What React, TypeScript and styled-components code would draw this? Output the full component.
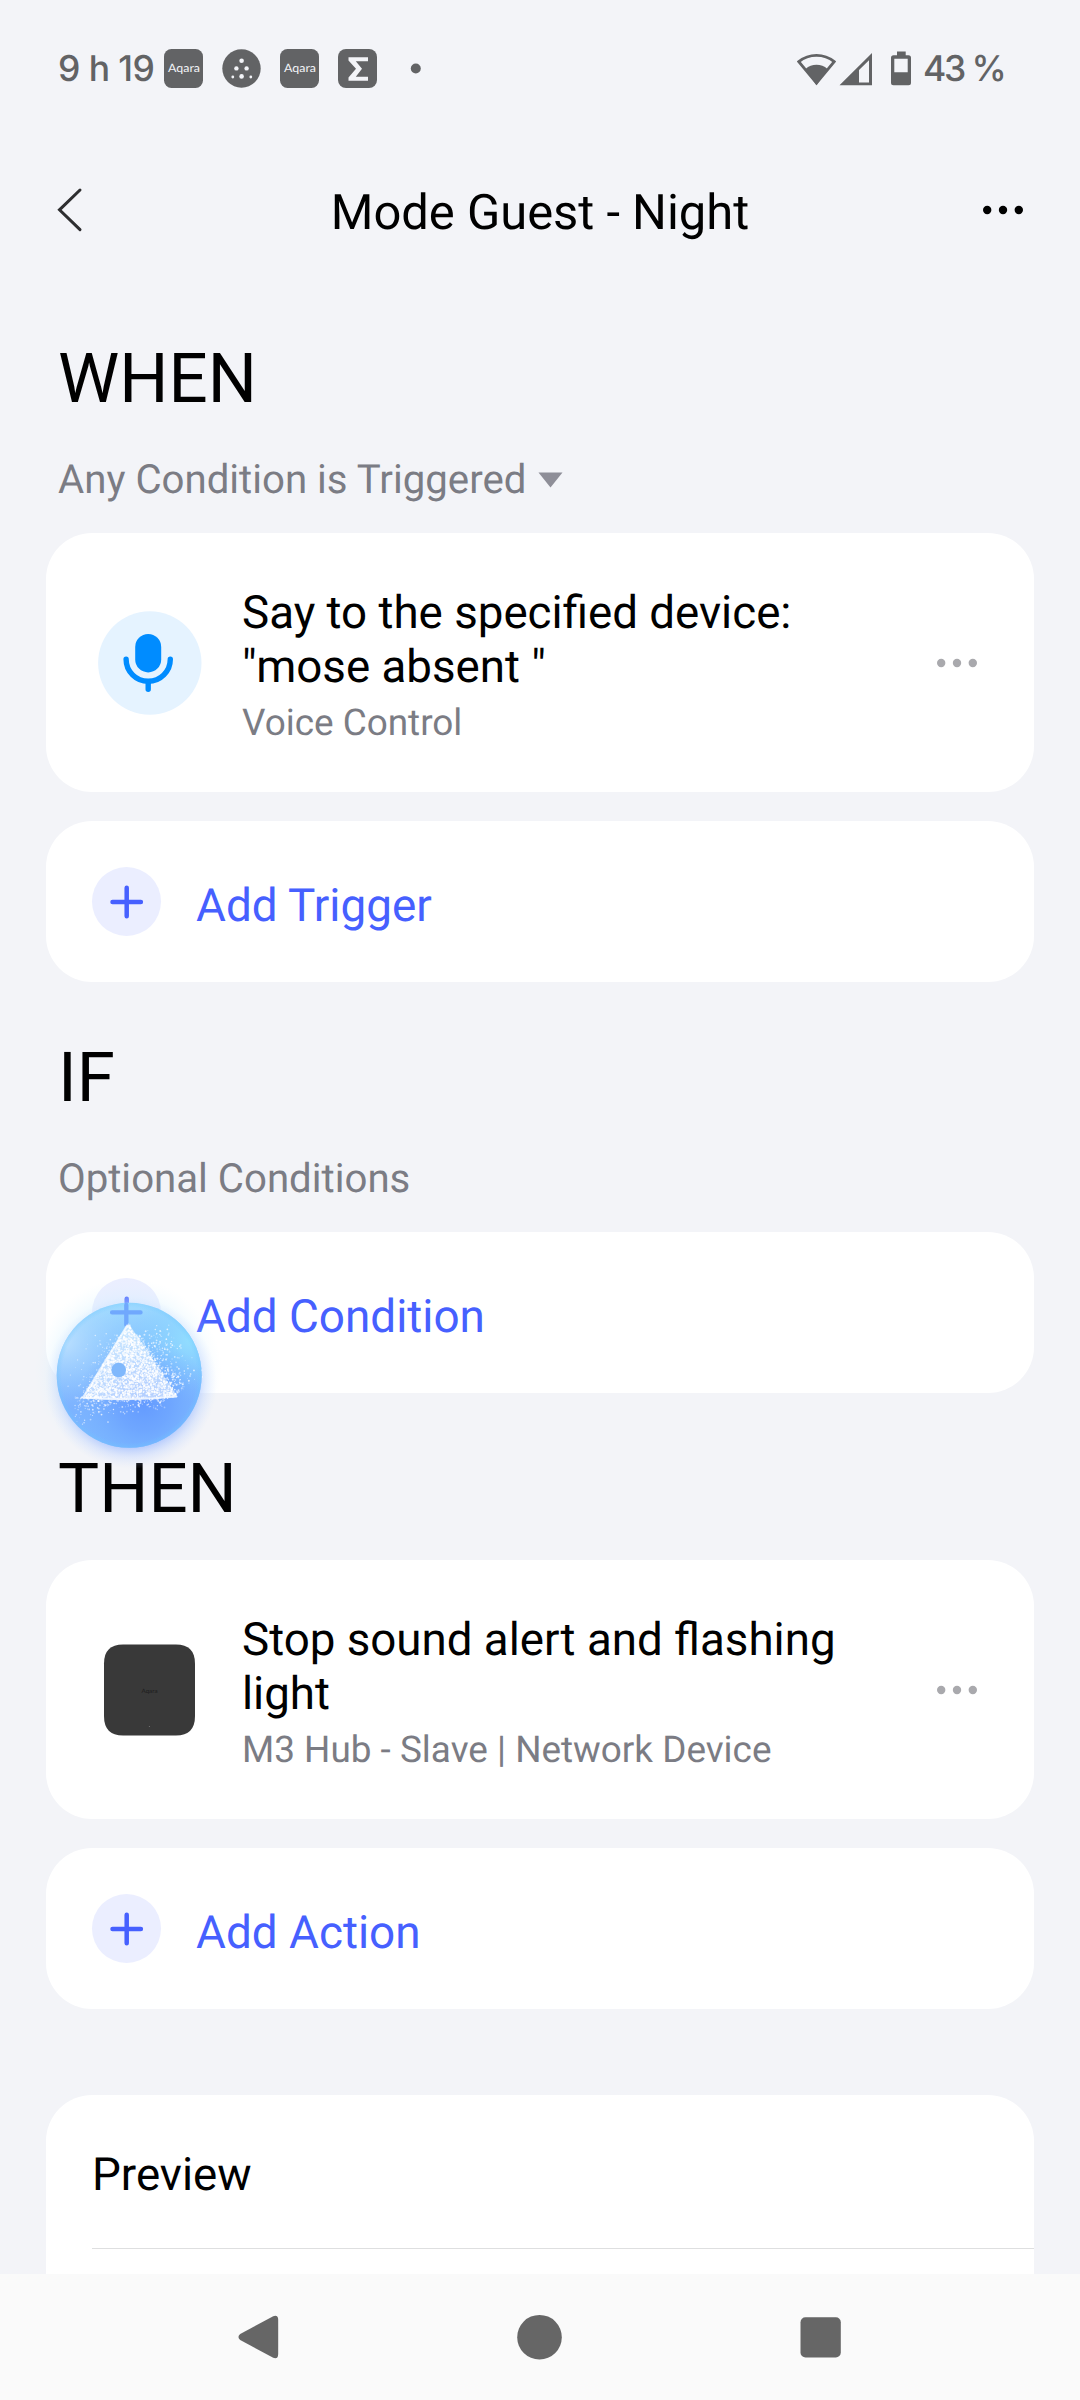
import React from "react";
import styled, { createGlobalStyle } from "styled-components";

const GlobalStyle = createGlobalStyle`
  * { box-sizing: border-box; }
  body { margin: 0; background: #f3f4f8; }
  svg { display: block; flex: none; }
`;

const Screen = styled.div`
  position: relative;
  width: 1080px;
  height: 2400px;
  display: flex;
  flex-direction: column;
  overflow: hidden;
  background: #f3f4f8;
  color: #000;
  font-family: Roboto, "Liberation Sans", sans-serif;
  text-rendering: geometricPrecision;
`;

const StatusBar = styled.div`
  flex: none;
  height: 137px;
  padding: 0 76px 0 58px;
  display: flex;
  justify-content: space-between;
`;

const StatusGroup = styled.div`
  height: 137px;
  display: flex;
  align-items: center;
`;

const StatusText = styled.span<{ $width: number; $spacing: number }>`
  width: ${(p) => p.$width}px;
  letter-spacing: ${(p) => p.$spacing}px;
  color: #626365;
  font-family: Inter, sans-serif;
  font-weight: 500;
  font-size: 35.5px;
  line-height: 137px;
  white-space: nowrap;
`;

const StatusIcons = styled.div`
  display: flex;
  align-items: center;
  gap: 19px;
  margin-left: 8px;
`;

const Header = styled.header`
  flex: none;
  height: 146px;
  padding: 0 56px 1px;
  display: flex;
  align-items: center;
  justify-content: space-between;
`;

const Title = styled.h1`
  margin: 0;
  padding: 7px 0 0 14px;
  font-weight: 400;
  font-size: 48.9px;
  line-height: 60px;
`;

const Scroll = styled.main`
  flex: 1;
  min-height: 0;
  overflow: hidden;
  padding: 0 46px;
`;

const Section = styled.section`
  padding-top: 56px;
`;

const Heading = styled.h2`
  margin: 0;
  padding-left: 12px;
  font-weight: 400;
  font-size: 69px;
  line-height: 80px;
`;

const Caption = styled.div`
  height: 48px;
  margin-top: 37px;
  padding-left: 12px;
  display: flex;
  align-items: center;
  gap: 12px;
  color: #7b7c84;
  font-size: 40.2px;
  line-height: 48px;
`;

const Cards = styled.div<{ $top: number }>`
  margin-top: ${(p) => p.$top}px;
  display: flex;
  flex-direction: column;
  gap: 29px;
`;

const Card = styled.div`
  background: #fff;
  border-radius: 46px;
`;

const DeviceCard = styled(Card)`
  height: 259px;
  padding: 0 56px 0 52px;
  display: flex;
  align-items: center;
`;

const DeviceText = styled.div`
  width: 640px;
  margin: 8px auto 0 40px;
`;

const DeviceTitle = styled.div`
  font-size: 45.7px;
  line-height: 54px;
`;

const DeviceSub = styled.div`
  margin-top: 7px;
  color: #7b7c84;
  font-size: 36.9px;
  line-height: 44px;
`;

const AddCard = styled(Card)`
  height: 161px;
  padding: 0 46px;
  display: flex;
  align-items: center;
  gap: 35px;
`;

const AddLabel = styled.span`
  padding-top: 8px;
  color: #4660ff;
  font-size: 45.85px;
  line-height: 54px;
`;

const PlusCircle = styled.span`
  width: 69px;
  height: 69px;
  display: grid;
  place-items: center;
  border-radius: 50%;
  background: #ebeeff;
`;

const PreviewCard = styled(Card)`
  height: 400px;
  margin-top: 86px;
  padding-left: 46px;
`;

const PreviewRow = styled.div`
  height: 154px;
  padding-top: 7px;
  border-bottom: 1px solid #dedfe0;
  display: flex;
  align-items: center;
  font-size: 45.7px;
`;

const NavBar = styled.nav`
  flex: none;
  height: 126px;
  background: #fafafa;
  display: grid;
  grid-template-columns: repeat(3, 281px);
  justify-content: center;
  align-items: center;
  justify-items: center;
`;

const Orb = styled.div`
  position: absolute;
  left: 29px;
  top: 1275px;
`;

const INK = "#626365";

const AqaraBadge = () => (
  <svg width="39" height="39" viewBox="0 0 39 39">
    <rect width="39" height="39" rx="7.5" fill={INK} />
    <text x="4" y="22.6" textLength="32" lengthAdjust="spacingAndGlyphs" fontFamily="Lato, sans-serif" fontWeight="400" fontSize="11.5" fill="#f3f4f8">
      Aqara
    </text>
  </svg>
);

const DotsBadge = () => (
  <svg width="39" height="39" viewBox="0 0 39 39">
    <circle cx="19.5" cy="19.5" r="19.2" fill={INK} />
    <g fill="#f3f4f8">
      <circle cx="19.6" cy="11.8" r="2.3" />
      <circle cx="14.4" cy="19.4" r="2.2" />
      <circle cx="24.6" cy="19.4" r="2.2" />
      <circle cx="19.6" cy="27.4" r="2.3" />
      <circle cx="10.8" cy="28" r="1.4" />
      <circle cx="28.8" cy="28" r="1.4" />
    </g>
  </svg>
);

const SigmaBadge = () => (
  <svg width="39" height="39" viewBox="0 0 39 39">
    <rect width="39" height="39" rx="8" fill={INK} />
    <path d="M30 8.2V12.2H17.8L24 19.8L17.8 27.8H30V31.8H10.5V28.4L18 19.8L10.5 11.6V8.2Z" fill="#f3f4f8" />
  </svg>
);

const OverflowDot = () => (
  <svg width="39" height="39" viewBox="0 0 39 39">
    <circle cx="19.8" cy="19.5" r="5" fill={INK} />
  </svg>
);

const SignalIcons = () => (
  <svg width="126" height="40" viewBox="797 47.5 126 40">
    <path d="M798.8 60.2A28 28 0 0 1 834.2 60.2L816.5 81.6Z" fill="none" stroke={INK} strokeWidth="2.8" />
    <path d="M805.5 67.4A17 17 0 0 1 827.5 67.4L816.5 83.8Z" fill={INK} />
    <path fillRule="evenodd" d="M839.5 83.8L872 51.5V83.8ZM859 68.5V81H869V58.7Z" fill={INK} />
    <path fillRule="evenodd" d="M897 50h8.7v3.8h2.8a2.5 2.5 0 0 1 2.5 2.5v25a2.5 2.5 0 0 1-2.5 2.5h-15a2.5 2.5 0 0 1-2.5-2.5v-25a2.5 2.5 0 0 1 2.5-2.5H897ZM894.3 57.3v13.4h13.4V57.3Z" fill={INK} />
  </svg>
);

const Ellipsis = ({ color }: { color: string }) => (
  <svg width="42" height="12" viewBox="0 0 42 12" fill={color}>
    <circle cx="5.2" cy="6" r="4.2" />
    <circle cx="21" cy="6" r="4.2" />
    <circle cx="36.8" cy="6" r="4.2" />
  </svg>
);

const MicIcon = () => (
  <svg width="104" height="104" viewBox="0 0 104 104">
    <circle cx="51.8" cy="52" r="51.7" fill="#e5f3ff" />
    <rect x="37.2" y="23" width="26" height="38.4" rx="13" fill="#008cff" />
    <path d="M28.1 48.2a22.1 22.1 0 0 0 44.2 0M50.2 71v7.2" fill="none" stroke="#008cff" strokeWidth="5.4" strokeLinecap="round" />
  </svg>
);

const HubIcon = () => (
  <svg width="104" height="104" viewBox="0 0 104 104">
    <path d="M25 6.5H78Q97 6.5 97 25.5V78Q97 97.5 78 97.5H25Q6 97.5 6 78V25.5Q6 6.5 25 6.5Z" fill="#393939" />
    <text x="43.5" y="54.5" textLength="16" lengthAdjust="spacingAndGlyphs" fontFamily="Lato, sans-serif" fontSize="6" fill="#1c1c1c">
      Aqara
    </text>
    <circle cx="51.4" cy="88.5" r="0.6" fill="#777" />
  </svg>
);

const Plus = () => (
  <PlusCircle>
    <svg width="36" height="36" viewBox="0 0 36 36">
      <path d="M17.7 3.8V32.2M3.5 18H31.9" stroke="#4660ff" strokeWidth="4.5" strokeLinecap="round" />
    </svg>
  </PlusCircle>
);

type Speck = { x: number; y: number; r: number; o: number };

/* Deterministic particle cloud filling a triangle, with stray specks around it. */
const makeSpecks = (): Speck[] => {
  let seed = 7;
  const rnd = () => {
    seed = (seed * 16807) % 2147483647;
    return seed / 2147483647;
  };
  const a = [99.3, 49];
  const b = [54, 123];
  const c = [149, 121.5];
  const out: Speck[] = [];
  for (let i = 0; i < 1700; i++) {
    let u = rnd();
    let v = rnd();
    if (u + v > 1) {
      u = 1 - u;
      v = 1 - v;
    }
    const spread = i % 4 === 0 ? 8 : 1.5;
    const x = a[0] + u * (b[0] - a[0]) + v * (c[0] - a[0]) + (rnd() - 0.5) * spread;
    const y = a[1] + u * (b[1] - a[1]) + v * (c[1] - a[1]) + (rnd() - 0.5) * spread;
    out.push({ x, y, r: 0.5 + rnd() * 0.6, o: 0.5 + rnd() * 0.5 });
  }
  for (let i = 0; i < 320; i++) {
    const t = rnd();
    const d = rnd() * rnd() * 40;
    out.push({ x: 106 + t * 42 + d * 0.85, y: 62 + t * 56 - d * 0.5, r: 0.4 + rnd() * 0.6, o: 0.3 + rnd() * 0.5 });
  }
  for (let i = 0; i < 240; i++) {
    const t = rnd();
    const d = rnd() * rnd() * 32;
    out.push({ x: 46 + t * 90, y: 122 + d * (1 - t * 0.5), r: 0.4 + rnd() * 0.6, o: 0.3 + rnd() * 0.5 });
  }
  for (let i = 0; i < 80; i++) {
    const t = rnd();
    const d = rnd() * rnd() * 28;
    out.push({ x: 92 - t * 36 - d, y: 60 + t * 60 - d * 0.3, r: 0.4 + rnd() * 0.4, o: 0.3 + rnd() * 0.4 });
  }
  return out;
};

const specks = makeSpecks();

const AssistantOrb = () => (
  <Orb>
    <svg width="200" height="200" viewBox="0 0 200 200">
      <defs>
        <linearGradient id="orbBase" x1="0.4" y1="0" x2="0.5" y2="1">
          <stop offset="0" stopColor="#a0dcff" stopOpacity="0.96" />
          <stop offset="0.28" stopColor="#86c4ff" stopOpacity="0.97" />
          <stop offset="0.65" stopColor="#7cb2ff" />
          <stop offset="1" stopColor="#7cb8ff" />
        </linearGradient>
        <radialGradient id="orbPale" cx="0.06" cy="0.28" r="0.45">
          <stop offset="0" stopColor="#cce8ff" stopOpacity="0.7" />
          <stop offset="1" stopColor="#a8d6ff" stopOpacity="0" />
        </radialGradient>
        <radialGradient id="orbCyan" cx="0.92" cy="0.26" r="0.42">
          <stop offset="0" stopColor="#92deff" />
          <stop offset="1" stopColor="#88d0ff" stopOpacity="0" />
        </radialGradient>
        <radialGradient id="orbDeep" cx="0.6" cy="0.7" r="0.46">
          <stop offset="0" stopColor="#649bff" />
          <stop offset="0.4" stopColor="#69a0ff" stopOpacity="0.7" />
          <stop offset="1" stopColor="#74b0ff" stopOpacity="0" />
        </radialGradient>
        <radialGradient id="orbRim" cx="0.5" cy="0.5" r="0.5">
          <stop offset="0.93" stopColor="#70c8ff" stopOpacity="0" />
          <stop offset="1" stopColor="#70c8ff" stopOpacity="0.35" />
        </radialGradient>
        <radialGradient id="glowBlue" cx="0.5" cy="0.5" r="0.5">
          <stop offset="0.74" stopColor="#98b4ff" stopOpacity="0.65" />
          <stop offset="0.86" stopColor="#b4c8ff" stopOpacity="0.3" />
          <stop offset="1" stopColor="#d0dcff" stopOpacity="0" />
        </radialGradient>
        <radialGradient id="glowCyan" cx="0.5" cy="0.5" r="0.5">
          <stop offset="0.72" stopColor="#c4ecff" stopOpacity="0.35" />
          <stop offset="1" stopColor="#e4f6ff" stopOpacity="0" />
        </radialGradient>
      </defs>
      <circle cx="99" cy="97" r="94" fill="url(#glowCyan)" />
      <circle cx="102" cy="108" r="86" fill="url(#glowBlue)" />
      <circle cx="100.2" cy="100.3" r="72.5" fill="url(#orbBase)" />
      <circle cx="100.2" cy="100.3" r="72.5" fill="url(#orbPale)" />
      <circle cx="100.2" cy="100.3" r="72.5" fill="url(#orbCyan)" />
      <circle cx="100.2" cy="100.3" r="72.5" fill="url(#orbDeep)" />
      <circle cx="100.2" cy="100.3" r="72.5" fill="url(#orbRim)" />
      <path d="M97.3 30V50M83.1 37.4H111.5" stroke="#6ca4fd" strokeWidth="4.3" strokeLinecap="round" opacity="0.9" />
      <path d="M99.3 48L53.5 123.5Q100 127 149 122Z" fill="#fff" opacity="0.5" />
      <path d="M98.5 50L54 122.5Q100 126 148 121.5" fill="none" stroke="#fff" strokeWidth="2.2" strokeLinejoin="round" opacity="0.7" />
      {specks.map((s, i) => (
        <circle key={i} cx={s.x.toFixed(2)} cy={s.y.toFixed(2)} r={s.r.toFixed(2)} fill="#fff" opacity={s.o.toFixed(2)} />
      ))}
      <circle cx="89.7" cy="95" r="7.3" fill="#80b8fc" />
    </svg>
  </Orb>
);

const AddRow = ({ label }: { label: string }) => (
  <AddCard>
    <Plus />
    <AddLabel>{label}</AddLabel>
  </AddCard>
);

const DeviceRow = ({ icon, title, sub }: { icon: React.ReactNode; title: string; sub: string }) => (
  <DeviceCard>
    {icon}
    <DeviceText>
      <DeviceTitle>{title}</DeviceTitle>
      <DeviceSub>{sub}</DeviceSub>
    </DeviceText>
    <Ellipsis color="#a9a9ad" />
  </DeviceCard>
);

export default function App() {
  return (
    <Screen>
      <GlobalStyle />
      <StatusBar>
        <StatusGroup>
          <StatusText $width={98} $spacing={-0.6}>9 h 19</StatusText>
          <StatusIcons>
            <AqaraBadge />
            <DotsBadge />
            <AqaraBadge />
            <SigmaBadge />
            <OverflowDot />
          </StatusIcons>
        </StatusGroup>
        <StatusGroup>
          <SignalIcons />
          <StatusText $width={81} $spacing={-2.2}>43 %</StatusText>
        </StatusGroup>
      </StatusBar>

      <Header>
        <svg width="28" height="46" viewBox="0 0 28 46">
          <path d="M24 3L3.5 22.8L24 42.6" fill="none" stroke="#2e2e30" strokeWidth="3" strokeLinecap="round" />
        </svg>
        <Title>Mode Guest - Night</Title>
        <Ellipsis color="#000" />
      </Header>

      <Scroll>
        <Section>
          <Heading>WHEN</Heading>
          <Caption>
            Any Condition is Triggered
            <svg width="25" height="16" viewBox="0 0 25 16">
              <path d="M0.5 0.5H24.5L12.5 15.5Z" fill="#8e8e98" />
            </svg>
          </Caption>
          <Cards $top={29}>
            <DeviceRow icon={<MicIcon />} title={'Say to the specified device: "mose absent "'} sub="Voice Control" />
            <AddRow label="Add Trigger" />
          </Cards>
        </Section>

        <Section>
          <Heading>IF</Heading>
          <Caption>Optional Conditions</Caption>
          <Cards $top={29}>
            <AddRow label="Add Condition" />
          </Cards>
        </Section>

        <Section>
          <Heading>THEN</Heading>
          <Cards $top={31}>
            <DeviceRow icon={<HubIcon />} title="Stop sound alert and flashing light" sub="M3 Hub - Slave | Network Device" />
            <AddRow label="Add Action" />
          </Cards>
        </Section>

        <PreviewCard>
          <PreviewRow>Preview</PreviewRow>
        </PreviewCard>
      </Scroll>

      <NavBar>
        <svg width="42" height="46" viewBox="0.8 0 42 46">
          <path d="M36 2.2L3 20Q-0.5 23 3 26L36 43.8Q41 45.5 41 40V6Q41 0.5 36 2.2Z" fill="#666" />
        </svg>
        <svg width="46" height="46" viewBox="0 0 46 46">
          <circle cx="22.5" cy="23.2" r="22.3" fill="#666" />
        </svg>
        <svg width="42" height="42" viewBox="0 0 42 42">
          <rect x="0.5" y="1.2" width="40.3" height="40.3" rx="5" fill="#666" />
        </svg>
      </NavBar>

      <AssistantOrb />
    </Screen>
  );
}
